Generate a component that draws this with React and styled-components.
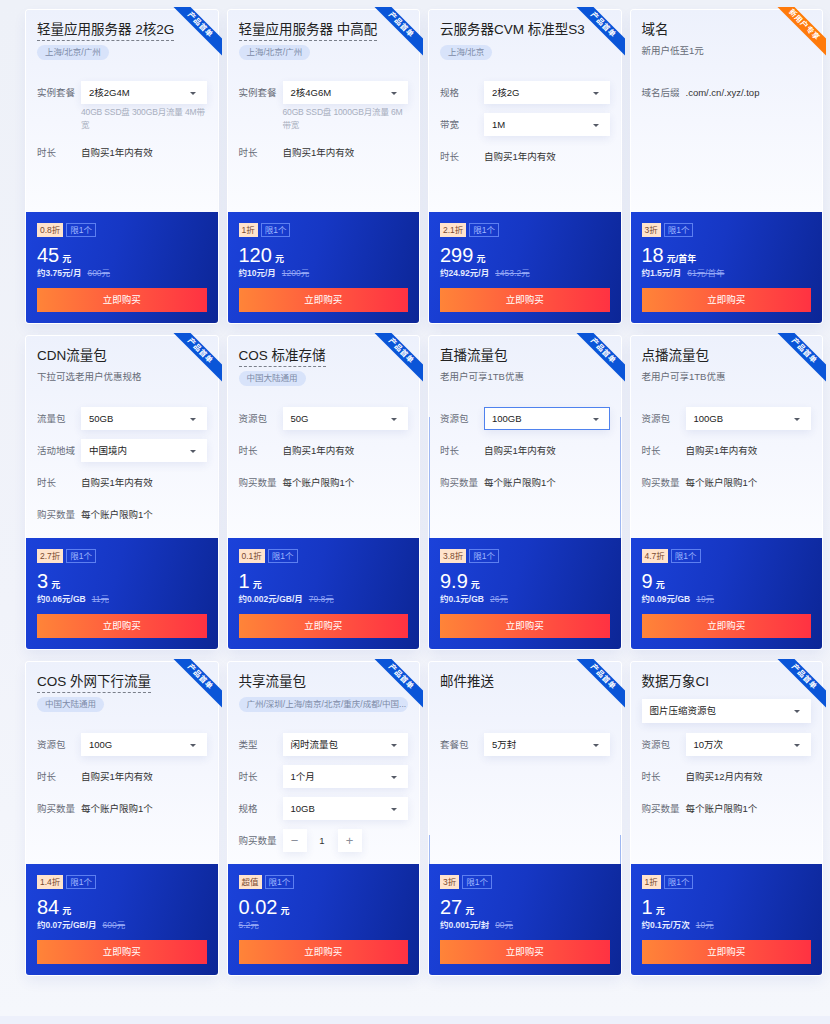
import React from 'react'
import styled, {createGlobalStyle} from 'styled-components';

const GlobalStyle = createGlobalStyle`
    html, body {
        margin: 0;
        padding: 0;
        background: #edf0fb;
    }
    body {
        font-family: "Liberation Sans", "Noto Sans CJK SC", sans-serif;
        color: #222;
    }
`;

const Section = styled.section`
    background: linear-gradient(180deg, #eef1f8 0%, #f1f3fa 60%, #f5f7fc 100%);
    padding: 10px 8px 41px 26px;
`;

const Footer = styled.div`
    height: 8px;
    background: #edf0fb;
`;

const Grid = styled.div`
    display: grid;
    grid-template-columns: repeat(4, minmax(0, 1fr));
    column-gap: 10px;
    row-gap: 13px;
`;

const Card = styled.div`
    position: relative;
    display: flex;
    flex-direction: column;
    min-width: 0;
    height: 313px;
    border-radius: 3px;
    box-shadow: 0 0 0 1px #fff, 0 6px 14px rgba(40, 70, 160, 0.08);
`;

const Ribbon = styled.div`
    position: absolute;
    top: -3px;
    right: -4px;
    width: 52px;
    height: 52px;
    overflow: hidden;
    z-index: 2;
`;

const RibbonBand = styled.div`
    position: absolute;
    left: -10px;
    top: 12px;
    width: 80px;
    height: 12px;
    transform: rotate(45deg);
    background: ${p => p.$orange ? '#ff7a0a' : '#0a55d8'};
    color: #fff;
    font-size: 7.5px;
    font-weight: bold;
    line-height: 12px;
    text-align: center;
    letter-spacing: 0.5px;
`;

const Top = styled.div`
    position: relative;
    flex: 1;
    padding: 11px 11px 0;
    border-radius: 3px 3px 0 0;
    background: linear-gradient(180deg, #edf1fc 0%, #f5f7fe 55%, #fbfcff 100%);

    &::after {
        content: '';
        display: ${p => p.$edge ? 'block' : 'none'};
        position: absolute;
        top: ${p => p.$edge || 0}px;
        bottom: 0;
        left: 0;
        right: 0;
        border-left: 1px solid #9fb8f2;
        border-right: 1px solid #9fb8f2;
        pointer-events: none;
    }
`;

const Header = styled.div`
    height: 60px;
    display: flex;
    flex-direction: column;
    align-items: flex-start;
`;

const Title = styled.div`
    font-size: 13.5px;
    line-height: 18px;
    height: 20px;
    color: #222;
    white-space: nowrap;
    border-bottom: 1px dashed ${p => p.$dotted ? '#7a7f8a' : 'transparent'};
    box-sizing: border-box;
`;

const Pill = styled.div`
    margin-top: 4px;
    height: 15px;
    line-height: 15px;
    padding: 0 8px;
    border-radius: 8px;
    background: #d8e3fa;
    color: #7c8aa6;
    font-size: 8.5px;
    white-space: nowrap;
    box-sizing: border-box;
    align-self: ${p => p.$wide ? 'stretch' : 'flex-start'};
`;

const Subtitle = styled.div`
    margin-top: 4px;
    font-size: 9.5px;
    line-height: 12px;
    color: #666b76;
`;

const Form = styled.div`
    display: flex;
    flex-direction: column;
    gap: 9px;
`;

const Row = styled.div`
    display: flex;
    align-items: flex-start;
`;

const Label = styled.div`
    width: 44px;
    flex-shrink: 0;
    font-size: 9.5px;
    line-height: 23px;
    color: #676c78;
    white-space: nowrap;
`;

const Field = styled.div`
    flex: 1;
    min-width: 0;
`;

const Value = styled.div`
    font-size: 9.5px;
    line-height: 23px;
    color: #333;
    white-space: nowrap;
`;

const SelectBox = styled.div`
    position: relative;
    height: ${p => p.$wide ? 24 : 23}px;
    margin-top: ${p => p.$wide ? 6 : 0}px;
    align-self: ${p => p.$wide ? 'stretch' : 'auto'};
    background: #fff;
    box-sizing: border-box;
    border: 1px solid ${p => p.$focused ? '#4f82ee' : '#fff'};
    box-shadow: 0 3px 8px rgba(40, 70, 150, 0.09);
    padding: 0 20px 0 7px;
    font-size: 9.5px;
    line-height: ${p => p.$wide ? 22 : 21}px;
    color: #222;

    &::after {
        content: '';
        position: absolute;
        right: 10px;
        top: 50%;
        margin-top: -1px;
        border-left: 3px solid transparent;
        border-right: 3px solid transparent;
        border-top: 3px solid #555a66;
    }
`;

const Hint = styled.div`
    margin-top: 2px;
    font-size: 8.5px;
    line-height: 13px;
    letter-spacing: -0.15px;
    color: #a9b0bf;
    word-break: break-all;
`;

const Stepper = styled.div`
    display: flex;
    align-items: center;
    height: 23px;
`;

const StepButton = styled.div`
    width: 24px;
    height: 23px;
    background: #fff;
    box-shadow: 0 3px 8px rgba(40, 70, 150, 0.09);
    color: #8a8f9a;
    font-size: 13px;
    line-height: 23px;
    text-align: center;
`;

const StepValue = styled.div`
    width: 31px;
    font-size: 9.5px;
    line-height: 23px;
    text-align: center;
    color: #333;
`;

const Bottom = styled.div`
    height: 111px;
    box-sizing: border-box;
    padding: 11px 11px;
    display: flex;
    flex-direction: column;
    border-radius: 0 0 3px 3px;
    background: linear-gradient(105deg, #1b42da 0%, #1637c4 45%, #0c2696 100%);
`;

const Badges = styled.div`
    display: flex;
    gap: 3px;
    height: 14px;
`;

const Discount = styled.span`
    height: 14px;
    box-sizing: border-box;
    padding: 0 3px;
    background: #ffe3cc;
    color: #7a4a30;
    font-size: 8.5px;
    line-height: 14px;
`;

const Limit = styled.span`
    height: 14px;
    box-sizing: border-box;
    padding: 0 3px;
    border: 1px solid #5d7ff0;
    color: #9fb6ff;
    font-size: 8.5px;
    line-height: 12px;
`;

const Price = styled.div`
    margin-top: 6px;
    height: 24px;
    line-height: 24px;
    color: #fff;
    font-size: 20px;
    white-space: nowrap;
`;

const Unit = styled.span`
    margin-left: 3px;
    font-size: 9px;
    font-weight: bold;
`;

const Sub = styled.div`
    height: 12px;
    line-height: 12px;
    font-size: 8.5px;
    font-weight: bold;
    color: #e4eaff;
    white-space: nowrap;
`;

const Old = styled.span`
    margin-left: ${p => p.$alone ? 0 : 6}px;
    font-weight: normal;
    color: #93a6f5;
    text-decoration: line-through;
`;

const BuyButton = styled.div`
    margin-top: auto;
    height: 24px;
    line-height: 24px;
    text-align: center;
    color: #fff;
    font-size: 9.5px;
    background: linear-gradient(90deg, #ff8438 0%, #ff5a3f 50%, #ff3242 100%);
`;

const cards = [
    {
        title: '轻量应用服务器 2核2G', dotted: true, pill: '上海/北京/广州',
        rows: [
            {label: '实例套餐', select: '2核2G4M', hint: '40GB SSD盘 300GB月流量 4M带宽'},
            {label: '时长', value: '自购买1年内有效'},
        ],
        discount: '0.8折', price: '45', unit: '元', per: '约3.75元/月', old: '600元',
    },
    {
        title: '轻量应用服务器 中高配', dotted: true, pill: '上海/北京/广州',
        rows: [
            {label: '实例套餐', select: '2核4G6M', hint: '60GB SSD盘 1000GB月流量 6M带宽'},
            {label: '时长', value: '自购买1年内有效'},
        ],
        discount: '1折', price: '120', unit: '元', per: '约10元/月', old: '1200元',
    },
    {
        title: '云服务器CVM 标准型S3', pill: '上海/北京',
        rows: [
            {label: '规格', select: '2核2G'},
            {label: '带宽', select: '1M'},
            {label: '时长', value: '自购买1年内有效'},
        ],
        discount: '2.1折', price: '299', unit: '元', per: '约24.92元/月', old: '1453.2元',
    },
    {
        title: '域名', subtitle: '新用户低至1元', ribbon: '新用户专享', orange: true,
        rows: [
            {label: '域名后缀', value: '.com/.cn/.xyz/.top'},
        ],
        discount: '3折', price: '18', unit: '元/首年', per: '约1.5元/月', old: '61元/首年',
    },
    {
        title: 'CDN流量包', subtitle: '下拉可选老用户优惠规格',
        rows: [
            {label: '流量包', select: '50GB'},
            {label: '活动地域', select: '中国境内'},
            {label: '时长', value: '自购买1年内有效'},
            {label: '购买数量', value: '每个账户限购1个'},
        ],
        discount: '2.7折', price: '3', unit: '元', per: '约0.06元/GB', old: '11元',
    },
    {
        title: 'COS 标准存储', dotted: true, pill: '中国大陆通用',
        rows: [
            {label: '资源包', select: '50G'},
            {label: '时长', value: '自购买1年内有效'},
            {label: '购买数量', value: '每个账户限购1个'},
        ],
        discount: '0.1折', price: '1', unit: '元', per: '约0.002元/GB/月', old: '79.8元',
    },
    {
        title: '直播流量包', subtitle: '老用户可享1TB优惠', edge: 81,
        rows: [
            {label: '资源包', select: '100GB', focused: true},
            {label: '时长', value: '自购买1年内有效'},
            {label: '购买数量', value: '每个账户限购1个'},
        ],
        discount: '3.8折', price: '9.9', unit: '元', per: '约0.1元/GB', old: '26元',
    },
    {
        title: '点播流量包', subtitle: '老用户可享1TB优惠',
        rows: [
            {label: '资源包', select: '100GB'},
            {label: '时长', value: '自购买1年内有效'},
            {label: '购买数量', value: '每个账户限购1个'},
        ],
        discount: '4.7折', price: '9', unit: '元', per: '约0.09元/GB', old: '19元',
    },
    {
        title: 'COS 外网下行流量', dotted: true, pill: '中国大陆通用',
        rows: [
            {label: '资源包', select: '100G'},
            {label: '时长', value: '自购买1年内有效'},
            {label: '购买数量', value: '每个账户限购1个'},
        ],
        discount: '1.4折', price: '84', unit: '元', per: '约0.07元/GB/月', old: '600元',
    },
    {
        title: '共享流量包', pill: '广州/深圳/上海/南京/北京/重庆/成都/中国...', widePill: true,
        rows: [
            {label: '类型', select: '闲时流量包'},
            {label: '时长', select: '1个月'},
            {label: '规格', select: '10GB'},
            {label: '购买数量', stepper: 1},
        ],
        discount: '超值', price: '0.02', unit: '元', old: '5.2元',
    },
    {
        title: '邮件推送', edge: 173,
        rows: [
            {label: '套餐包', select: '5万封'},
        ],
        discount: '3折', price: '27', unit: '元', per: '约0.001元/封', old: '90元',
    },
    {
        title: '数据万象CI', wideSelect: '图片压缩资源包',
        rows: [
            {label: '资源包', select: '10万次'},
            {label: '时长', value: '自购买12月内有效'},
            {label: '购买数量', value: '每个账户限购1个'},
        ],
        discount: '1折', price: '1', unit: '元', per: '约0.1元/万次', old: '10元',
    },
];

function FormRow({row}) {
    let field;
    if (row.select) {
        field = (
            <>
                <SelectBox $focused={row.focused}>{row.select}</SelectBox>
                {row.hint && <Hint>{row.hint}</Hint>}
            </>
        );
    } else if (row.stepper) {
        field = (
            <Stepper>
                <StepButton>−</StepButton>
                <StepValue>{row.stepper}</StepValue>
                <StepButton>+</StepButton>
            </Stepper>
        );
    } else {
        field = <Value>{row.value}</Value>;
    }
    return (
        <Row>
            <Label>{row.label}</Label>
            <Field>{field}</Field>
        </Row>
    );
}

function ProductCard({card}) {
    return (
        <Card>
            <Ribbon>
                <RibbonBand $orange={card.orange}>{card.ribbon || '产品首单'}</RibbonBand>
            </Ribbon>
            <Top $edge={card.edge}>
                <Header>
                    <Title $dotted={card.dotted}>{card.title}</Title>
                    {card.pill && <Pill $wide={card.widePill}>{card.pill}</Pill>}
                    {card.subtitle && <Subtitle>{card.subtitle}</Subtitle>}
                    {card.wideSelect && <SelectBox $wide>{card.wideSelect}</SelectBox>}
                </Header>
                <Form>
                    {card.rows.map((row, i) => <FormRow key={i} row={row}/>)}
                </Form>
            </Top>
            <Bottom>
                <Badges>
                    <Discount>{card.discount}</Discount>
                    <Limit>限1个</Limit>
                </Badges>
                <Price>{card.price}<Unit>{card.unit}</Unit></Price>
                <Sub>
                    {card.per}
                    <Old $alone={!card.per}>{card.old}</Old>
                </Sub>
                <BuyButton>立即购买</BuyButton>
            </Bottom>
        </Card>
    );
}

export default function App() {
    return (
        <>
            <GlobalStyle/>
            <Section>
                <Grid>
                    {cards.map((card, i) => <ProductCard key={i} card={card}/>)}
                </Grid>
            </Section>
            <Footer/>
        </>
    );
}
